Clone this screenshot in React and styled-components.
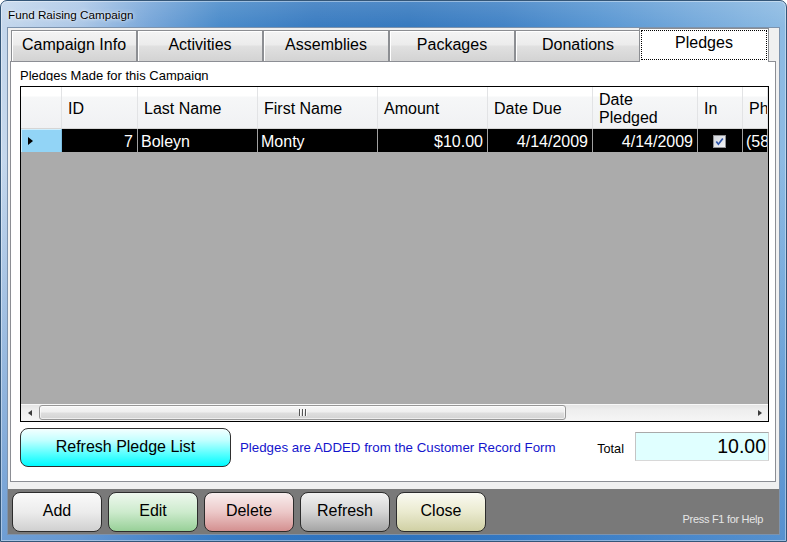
import React from 'react';
import styled, { createGlobalStyle, css } from 'styled-components';

const FONT = `"Liberation Sans", Arial, sans-serif`;

const GlobalStyle = createGlobalStyle`
  html, body { margin: 0; padding: 0; background: #ffffff; }
  body { font-family: ${FONT}; color: #000; }
  *, *::before, *::after { box-sizing: border-box; }
`;

const Window = styled.div`
  width: 787px;
  height: 542px;
  border: 1px solid #345678;
  border-radius: 7px 7px 0 0;
  padding: 0 6px 6px 6px;
  display: flex;
  flex-direction: column;
  background:
    linear-gradient(180deg, rgba(255,255,255,0.12) 0px, rgba(255,255,255,0) 26px, rgba(40,110,190,0) 160px, rgba(40,110,190,0.55) 100%),
    linear-gradient(90deg, #c5d8ed 0%, #adc8e7 10%, #77a6d9 19%, #4a8bca 28%, #3a7cc1 40%, #377abf 52%, #4283c6 64%, #5896d2 76%, #74a9db 88%, #8dbbe3 100%);
  box-shadow: inset 0 0 0 1px rgba(255,255,255,0.4);
`;

const TitleBar = styled.div`
  height: 26px;
  flex: none;
  display: flex;
  align-items: center;
  padding-left: 1px;
  font-size: 11.7px;
  color: #000;
  text-shadow: 0 0 5px rgba(255,255,255,0.9), 0 0 2px rgba(255,255,255,0.7);
`;

const Client = styled.div`
  flex: 1;
  min-height: 0;
  border: 1px solid #7d93ad;
  background: #f0f0f0;
  display: flex;
  flex-direction: column;
`;

const TabControl = styled.div`
  flex: 1;
  min-height: 0;
  padding: 0 3px 7px 2px;
  display: flex;
  flex-direction: column;
`;

const TabStrip = styled.div`
  height: 33px;
  flex: none;
  display: flex;
  align-items: flex-end;
  padding-left: 1px;
`;

const Tab = styled.div`
  flex: none;
  width: 126px;
  height: 31px;
  border: 1px solid #8c8e92;
  border-bottom: none;
  background: linear-gradient(180deg, #f4f4f4 0%, #ececec 45%, #e0e0e0 52%, #d3d3d3 100%);
  box-shadow: inset 1px 1px 0 #ffffff;
  display: flex;
  align-items: center;
  justify-content: center;
  padding-bottom: 3px;
  font-size: 16px;
  white-space: nowrap;

  ${(p) => p.$selected && css`
    width: 130px;
    height: 34px;
    margin: 0 -2px -1px -2px;
    position: relative;
    z-index: 1;
    background: #ffffff;
    box-shadow: none;
    padding: 1px 1px 2px 1px;
    align-items: stretch;
  `}
`;

const FocusRect = styled.div`
  flex: 1;
  border: 1px dotted #000;
  text-align: center;
  padding-top: 1px;
  line-height: 22px;
`;

const TabPage = styled.div`
  flex: 1;
  min-height: 0;
  border: 1px solid #8c8e94;
  background: #ffffff;
  padding: 0 6px 0 9px;
  display: flex;
  flex-direction: column;
`;

const Caption = styled.div`
  height: 19px;
  flex: none;
  padding-top: 6px;
  line-height: 16px;
  font-size: 13px;
  overflow: hidden;
  white-space: nowrap;
  margin-bottom: 5px;
`;

const Grid = styled.div`
  height: 336px;
  flex: none;
  border: 1px solid #000;
  background: #ababab;
  display: flex;
  flex-direction: column;
  overflow: hidden;
`;

const GridRow = styled.div`
  flex: none;
  display: grid;
  grid-template-columns: ${(p) => p.$cols};
  height: ${(p) => p.$h}px;
`;

const HeaderCell = styled.div`
  border-right: 1px solid #e2e3e5;
  border-bottom: 1px solid #d5d5d5;
  background: linear-gradient(180deg, #ffffff 0px, #ffffff 9px, #f6f7f8 10px, #f0f1f3 100%);
  padding: 2px 0 0 6px;
  display: flex;
  align-items: center;
  font-size: 16px;
  line-height: 18px;
  white-space: nowrap;
  overflow: hidden;
`;

const RowHeader = styled.div`
  background: #92d4f6;
  border-right: 1px solid #7cbde0;
  box-shadow: inset 1px 1px 0 #cdeefe;
  padding-left: 7px;
  display: flex;
  align-items: center;
`;

const RowArrow = styled.span`
  width: 0;
  height: 0;
  border-left: 5px solid #000;
  border-top: 4px solid transparent;
  border-bottom: 4px solid transparent;
`;

const DataCell = styled.div`
  background: #000;
  color: #fff;
  border-right: 1px solid #a0a0a0;
  padding: 2px 4px 0 3px;
  display: flex;
  align-items: center;
  justify-content: ${(p) => (p.$align === 'right' ? 'flex-end' : p.$align === 'center' ? 'center' : 'flex-start')};
  font-size: 16px;
  white-space: nowrap;
  overflow: hidden;
`;

const GridEmpty = styled.div`
  flex: 1;
  background: #ababab;
`;

const HScroll = styled.div`
  height: 17px;
  flex: none;
  display: flex;
  background: linear-gradient(180deg, #e2e2e2 0%, #eeeeee 35%, #f5f5f5 100%);
  box-shadow: inset 0 1px 0 #f8f8f8;
`;

const ScrollButton = styled.div`
  width: 17px;
  flex: none;
  display: flex;
  align-items: center;
  justify-content: center;
`;

const ScrollArrow = styled.span`
  width: 0;
  height: 0;
  border-top: 3.5px solid transparent;
  border-bottom: 3.5px solid transparent;
  ${(p) => (p.$dir === 'left'
    ? css`border-right: 4px solid #3c3c3c;`
    : css`border-left: 4px solid #3c3c3c;`)}
`;

const Thumb = styled.div`
  width: 527px;
  flex: none;
  margin: 1px 0 1px 1px;
  border: 1px solid #979797;
  border-radius: 3px;
  background: linear-gradient(180deg, #f7f7f7 0%, #efefef 45%, #dedede 55%, #d3d3d3 100%);
  box-shadow: inset 0 0 0 1px rgba(255,255,255,0.6);
  display: flex;
  align-items: center;
  justify-content: center;
  gap: 1px;
`;

const GripLine = styled.span`
  width: 1px;
  height: 7px;
  background: #555;
  box-shadow: 1px 0 0 #fafafa;
  margin-right: 1px;
`;

const Track = styled.div`
  flex: 1;
`;

const ActionRow = styled.div`
  height: 39px;
  flex: none;
  margin-top: 6px;
  display: flex;
  align-items: center;
`;

const RefreshListButton = styled.button`
  width: 211px;
  height: 39px;
  flex: none;
  border: 1px solid #303030;
  border-radius: 8px;
  background: linear-gradient(180deg, #f4ffff 0%, #c4ffff 30%, #50ffff 70%, #00fbff 100%);
  font-family: ${FONT};
  font-size: 16px;
  color: #000;
  padding: 0 0 2px 0;
`;

const Note = styled.div`
  margin-left: 9px;
  font-size: 13.3px;
  color: #1414cc;
  white-space: nowrap;
`;

const TotalLabel = styled.div`
  margin-left: auto;
  margin-right: 11px;
  font-size: 12.7px;
  padding-top: 2px;
`;

const TotalBox = styled.div`
  width: 134px;
  height: 29px;
  flex: none;
  margin-top: -2px;
  border: 1px solid;
  border-color: #a9a9a9 #cfcfcf #d8d8d8 #c4c4c4;
  background: #e0ffff;
  font-size: 19.5px;
  text-align: right;
  padding-right: 2px;
  line-height: 27px;
`;

const BottomBar = styled.div`
  height: 45px;
  flex: none;
  background: #797979;
  display: flex;
  align-items: flex-start;
  padding: 3px 0 0 4px;
  gap: 6px;
`;

const TONES = {
  gray: ['#fafafa', '#ececec', '#d0d0d0'],
  green: ['#eef8ee', '#cdebcd', '#98d098'],
  red: ['#f8eeee', '#ecc8c8', '#d49090'],
  dark: ['#f2f2f2', '#d4d4d4', '#a4a4a4'],
  khaki: ['#fafaf2', '#eaeacf', '#d0d0a4'],
};

const CmdButton = styled.button`
  width: 90px;
  height: 40px;
  flex: none;
  border: 1px solid #2c2c2c;
  border-radius: 8px;
  background: ${(p) => {
    const [a, b, c] = TONES[p.$tone];
    return `linear-gradient(180deg, ${a} 0%, ${b} 50%, ${c} 100%)`;
  }};
  font-family: ${FONT};
  font-size: 16px;
  color: #000;
  padding: 0 0 3px 0;
`;

const HelpText = styled.div`
  margin-left: auto;
  margin-right: 16px;
  margin-top: 20px;
  font-size: 11px;
  line-height: 14px;
  letter-spacing: -0.3px;
  color: #e6e6e6;
  white-space: nowrap;
`;

const CheckBox = () => (
  <svg width="13" height="13" viewBox="0 0 13 13">
    <defs>
      <linearGradient id="cbfill" x1="0" y1="0" x2="1" y2="1">
        <stop offset="0" stopColor="#cfd3da" />
        <stop offset="1" stopColor="#f4f5f7" />
      </linearGradient>
    </defs>
    <rect x="0.5" y="0.5" width="12" height="12" fill="url(#cbfill)" stroke="#8f9093" />
    <path d="M3.3 6.4 L5.4 9.2 L9.8 3.4" stroke="#2c54a8" strokeWidth="1.7" fill="none" />
  </svg>
);

const TABS = ['Campaign Info', 'Activities', 'Assemblies', 'Packages', 'Donations', 'Pledges'];

const COLS = [
  { key: 'id', label: 'ID', w: 76, align: 'right' },
  { key: 'last', label: 'Last Name', w: 120 },
  { key: 'first', label: 'First Name', w: 120 },
  { key: 'amount', label: 'Amount', w: 110, align: 'right' },
  { key: 'due', label: 'Date Due', w: 105, align: 'right' },
  { key: 'pledged', label: ['Date', 'Pledged'], w: 105, align: 'right' },
  { key: 'in', label: 'In', w: 45, align: 'center' },
  { key: 'phone', label: 'Phone', w: null },
];

const GRID_COLS = `41px ${COLS.map((c) => (c.w ? `${c.w}px` : '1fr')).join(' ')}`;

const ROWS = [
  {
    id: '7',
    last: 'Boleyn',
    first: 'Monty',
    amount: '$10.00',
    due: '4/14/2009',
    pledged: '4/14/2009',
    in: true,
    phone: '(585) 555-0142',
  },
];

const BUTTONS = [
  { label: 'Add', tone: 'gray' },
  { label: 'Edit', tone: 'green' },
  { label: 'Delete', tone: 'red' },
  { label: 'Refresh', tone: 'dark' },
  { label: 'Close', tone: 'khaki' },
];

export default function App() {
  return (
    <>
      <GlobalStyle />
      <Window>
        <TitleBar>Fund Raising Campaign</TitleBar>
        <Client>
          <TabControl>
            <TabStrip>
              {TABS.map((t) =>
                t === 'Pledges' ? (
                  <Tab key={t} $selected>
                    <FocusRect>{t}</FocusRect>
                  </Tab>
                ) : (
                  <Tab key={t}>{t}</Tab>
                )
              )}
            </TabStrip>
            <TabPage>
              <Caption>Pledges Made for this Campaign</Caption>
              <Grid>
                <GridRow $cols={GRID_COLS} $h={42}>
                  <HeaderCell />
                  {COLS.map((c) => (
                    <HeaderCell key={c.key}>
                      {Array.isArray(c.label) ? (
                        <span>
                          {c.label[0]}
                          <br />
                          {c.label[1]}
                        </span>
                      ) : (
                        c.label
                      )}
                    </HeaderCell>
                  ))}
                </GridRow>
                {ROWS.map((r) => (
                  <GridRow key={r.id} $cols={GRID_COLS} $h={23}>
                    <RowHeader>
                      <RowArrow />
                    </RowHeader>
                    {COLS.map((c) => (
                      <DataCell key={c.key} $align={c.align}>
                        {c.key === 'in' ? (r.in ? <CheckBox /> : null) : r[c.key]}
                      </DataCell>
                    ))}
                  </GridRow>
                ))}
                <GridEmpty />
                <HScroll>
                  <ScrollButton>
                    <ScrollArrow $dir="left" />
                  </ScrollButton>
                  <Thumb>
                    <GripLine />
                    <GripLine />
                    <GripLine />
                  </Thumb>
                  <Track />
                  <ScrollButton>
                    <ScrollArrow $dir="right" />
                  </ScrollButton>
                </HScroll>
              </Grid>
              <ActionRow>
                <RefreshListButton>Refresh Pledge List</RefreshListButton>
                <Note>Pledges are ADDED from the Customer Record Form</Note>
                <TotalLabel>Total</TotalLabel>
                <TotalBox>10.00</TotalBox>
              </ActionRow>
            </TabPage>
          </TabControl>
          <BottomBar>
            {BUTTONS.map((b) => (
              <CmdButton key={b.label} $tone={b.tone}>
                {b.label}
              </CmdButton>
            ))}
            <HelpText>Press F1 for Help</HelpText>
          </BottomBar>
        </Client>
      </Window>
    </>
  );
}
